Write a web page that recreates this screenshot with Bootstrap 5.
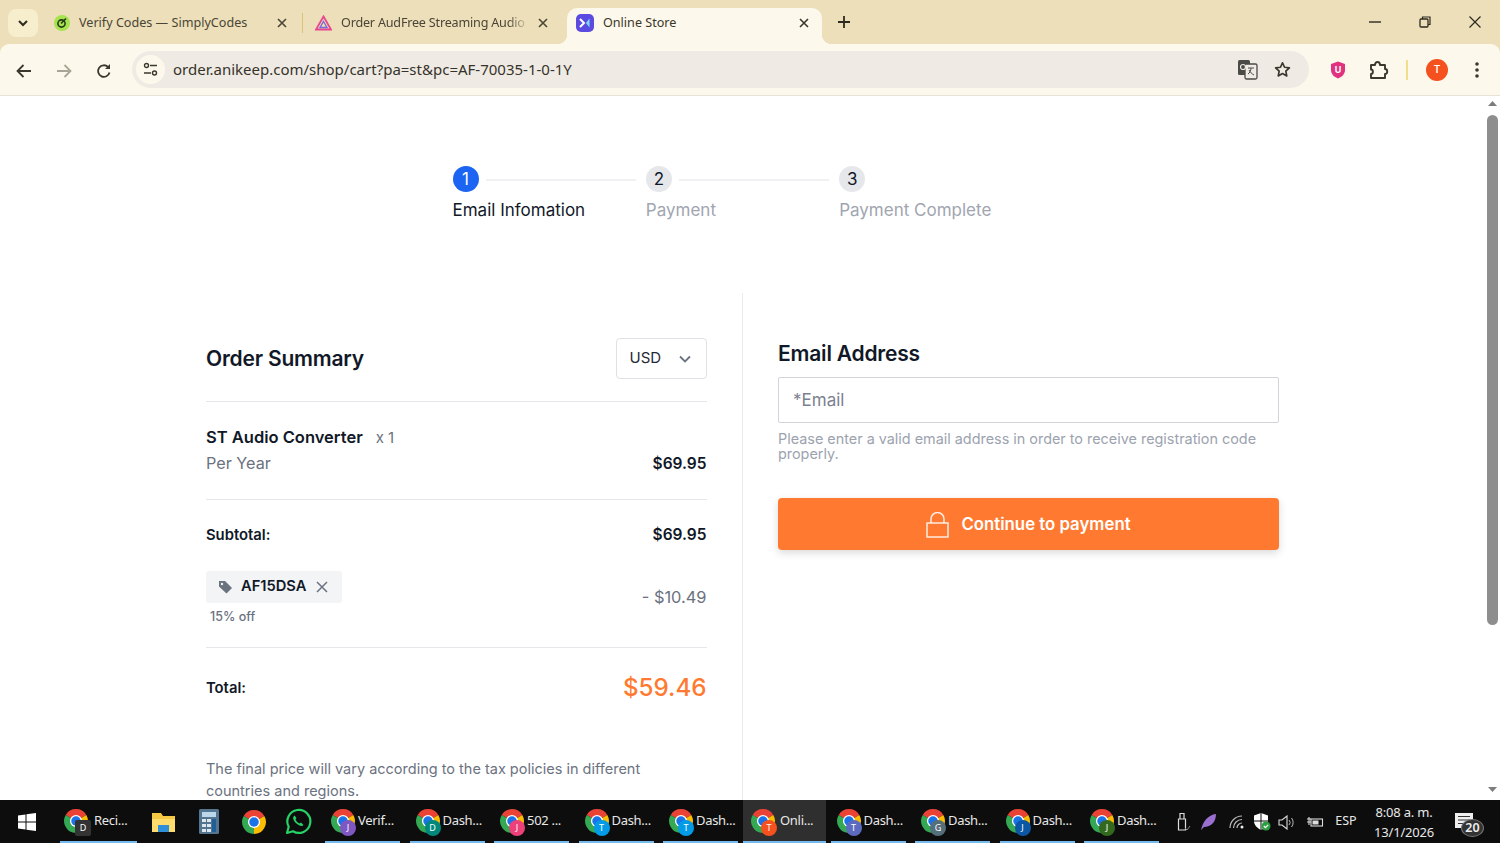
<!DOCTYPE html>
<html lang="en">
  <head>
    <meta charset="UTF-8" />
    <meta name="viewport" content="width=device-width, initial-scale=1.0" />
    <title>Online Store</title>
    <link href="https://cdn.jsdelivr.net/npm/bootstrap@5.3.3/dist/css/bootstrap.min.css" rel="stylesheet" />
    <style>
      html, body { height: 100%; overflow: hidden; }
      body { font-family: "Inter", "Liberation Sans", sans-serif; color: #111827; background: #fff; }
      .app-shell { height: 843px; width: 1500px; background: #ecdfb9; }

      /* browser tabs */
      .tab-strip { height: 44px; font-family: "Noto Sans", sans-serif; font-size: 12.6px; color: #4a4536; }
      .tab-menu { width: 30px; height: 28px; margin: 9px 0 0 8px; background: #f6eecd; border-radius: 8px; }
      .tab-item { height: 36px; margin-top: 8px; padding-bottom: 7px; white-space: nowrap; }
      .tab-one { width: 260px; margin-left: 5px; padding-left: 11px; }
      .tab-two { width: 264px; padding-left: 12px; }
      .tab-live { width: 255px; background: #fdf8ec; border-radius: 10px 10px 0 0; padding-left: 9px; color: #3a3629; position: relative; }
      .tab-live::before, .tab-live::after { content: ""; position: absolute; bottom: 0; width: 10px; height: 10px; }
      .tab-live::before { left: -10px; background: radial-gradient(circle at 0 0, transparent 10px, #fdf8ec 10.5px); }
      .tab-live::after { right: -10px; background: radial-gradient(circle at 100% 0, transparent 10px, #fdf8ec 10.5px); }
      .tab-title { flex: 1 1 auto; overflow: hidden; margin: 2px 0 0 9px; min-width: 0; }
      .tab-fade { letter-spacing: -.2px; -webkit-mask-image: linear-gradient(90deg, #000 88%, transparent); mask-image: linear-gradient(90deg, #000 88%, transparent); }
      .tab-sep { width: 1px; height: 20px; background: #d9c27a; flex: none; margin-left: 15px; }
      .tab-x { width: 10px; height: 10px; flex: none; }
      .tab-x-two { margin: 0 19px 0 8px; }
      .tab-x-live { margin: 0 13px 0 auto; }
      .tab-plus { margin-left: 16px; }
      .win-btns { margin-left: auto; }
      .win-btn { width: 50px; height: 44px; }

      /* toolbar */
      .tool-bar { height: 52px; background: #fdf8ec; border-bottom: 1px solid #e8e2d4; border-radius: 9px 9px 0 0; }
      .tool-btn { width: 40px; }
      .omni-box { width: 1177px; height: 37px; background: #efebe4; border-radius: 19px; font-family: "Noto Sans", sans-serif; font-size: 15px; color: #36332b; }
      .omni-tune { width: 29px; height: 29px; border-radius: 50%; background: #fdf8ec; margin: 0 8px 0 4px; }
      .omni-star { margin: 0 18px 0 16px; }
      .shield-ext { margin-left: 21px; }
      .puzzle-ext { margin-left: 23px; }
      .tool-line { width: 2px; height: 20px; background: #f3dc8a; margin-left: 17px; }
      .avatar-dot { width: 22px; height: 22px; background: #f4511e; color: #fff; font-size: 10px; font-weight: 600; margin-left: 18px; }
      .tool-dots { margin-left: 27px; }

      /* page */
      .page-view { height: 704px; overflow: hidden; background: #fff; }
      .page-scroll { flex: 1 1 auto; overflow: hidden; min-width: 0; }
      .scroll-rail { width: 15px; flex: none; background: #fff; }
      .scroll-thumb { width: 11px; height: 510px; background: #8e8e8e; border-radius: 5.5px; margin: 5px auto 0; }
      .scroll-end { margin-bottom: 6px; }
      .step-row { width: 580px; margin: 70px auto 0; }
      .step-cell { width: 193.33px; flex: none; }
      .step-num { width: 26px; height: 26px; flex: none; padding-top: 2px; background: #e5e7eb; color: #111827; font-size: 17px; }
      .step-on { background: #1c64f2; color: #fff; }
      .step-bar { flex: 1 1 auto; height: 2px; background: #f0f1f3; margin: 2px 10px 0 7px; }
      .step-label { font-size: 17px; line-height: 24px; color: #a1a5b0; margin-top: 6px; white-space: nowrap; }
      .step-label-on { color: #111827; }
      .cart-wrap { width: 1073px; margin: 71px auto 0; }
      .cart-left { border-right: 1px solid #e9eaec; padding: 45px 35px 0 0; height: 560px; }
      .cart-right { padding: 46px 0 0 35.5px; }
      .cart-head { font-size: 21px; font-weight: 600; line-height: 30px; letter-spacing: -.2px; }
      .head-row { margin-bottom: 22px; }
      .cur-pick { width: 91px; height: 41px; border: 1px solid #dfe1e5; border-radius: 4px; padding: 0 15px 0 13px; font-size: 15px; color: #1f2937; }
      .cart-rule { height: 1px; background: #e5e7eb; }
      .item-block { padding: 23px 0 24px; }
      .item-name { font-size: 16.5px; font-weight: 600; line-height: 24px; }
      .item-qty { font-size: 15px; color: #6b7280; margin-left: 13px; }
      .item-term { font-size: 16.2px; color: #6b7280; line-height: 24px; margin-top: 1px; }
      .price-bold { font-size: 15.5px; font-weight: 600; line-height: 24px; margin: 1px 0 -1px; }
      .sub-label { font-size: 14.8px; font-weight: 600; padding-top: 3px; }
      .sub-block { height: 68px; }
      .promo-block { padding: 3px 0 22px; }
      .promo-chip { width: 136px; height: 32px; background: #f3f4f6; border-radius: 3px; padding-left: 12px; font-size: 14.7px; font-weight: 600; }
      .promo-drop { margin-left: 10px; }
      .promo-off { font-size: 12.5px; font-weight: 500; color: #6b7280; margin: 6px 0 0 4px; line-height: 16px; }
      .promo-cut { font-size: 16.4px; color: #6b7280; }
      .total-block { height: 79px; margin-bottom: 31px; }
      .grand-price { font-size: 24.2px; font-weight: 500; color: #ff7a30; line-height: 34px; margin: 1px 0 -1px; }
      .cart-note { font-size: 14.5px; line-height: 22px; color: #6b7280; }
      .mail-input.form-control { height: 46px; border-radius: 2px; border-color: #d1d5db; font-size: 17px; padding: 0 14px; margin-top: 8px; }
      .mail-input.form-control::placeholder { color: #7b8190; }
      .mail-help { font-size: 14.4px; line-height: 15px; color: #9ca3af; margin-top: 8px; }
      .pay-btn.btn { height: 52px; width: 100%; gap: 12px; margin-top: 37px; padding-top: 8px; background: #ff7a30; border: 0; border-radius: 4px; color: #fff; font-size: 16.8px; font-weight: 600; box-shadow: 0 3px 8px rgba(0,0,0,.15); }

      /* taskbar */
      .task-bar { height: 43px; background: #0d0d0d; color: #e8e8e8; font-family: "Noto Sans", sans-serif; font-size: 13px; letter-spacing: -.3px; }
      .start-cell { width: 54px; }
      .app-run { width: 75px; height: 43px; margin-left: 9.5px; position: relative; border-bottom: 2px solid #76b9ed; padding: 0 0 0 5px; white-space: nowrap; }
      .app-run-wide { width: 77px; margin-left: 6px; padding-left: 3px; }
      .app-run-wide .app-text { margin-left: 5px; }
      .app-run-first { margin-left: 4px; }
      .app-live { width: 83px; margin: 0 -5px 0 5px; background: #2f2f2f; padding-left: 7px; }
      .app-live .app-text { margin-left: 4px; }
      .app-pin { width: 45px; height: 43px; }
      .app-chrome { width: 26px; height: 26px; flex: none; }
      .app-text { margin-left: 2px; }
      .app-dot { position: absolute; top: 20px; left: 15px; width: 16px; height: 16px; border-radius: 50%; font-size: 9px; line-height: 16px; text-align: center; color: #fff; letter-spacing: 0; }
      .app-live .app-dot { left: 18px; }
      .dot-square { background: #333; border-radius: 2px; }
      .dot-violet { background: #7e57c2; }
      .dot-teal { background: #00897b; }
      .dot-pink { background: #ec407a; }
      .dot-sky { background: #039be5; }
      .dot-red { background: #f4511e; }
      .dot-indigo { background: #5c6bc0; }
      .dot-slate { background: #546e7a; }
      .dot-navy { background: #0b57a4; }
      .dot-moss { background: #33691e; }
      .tray-zone { margin-left: auto; align-self: stretch; }
      .tray-cell { width: 25px; }
      .tray-wifi { margin-left: 3px; }
      .tray-batt { margin-left: 3px; }
      .tray-lang { font-size: 12.5px; width: 38px; letter-spacing: 0; }
      .tray-clock { width: 72px; font-size: 13px; line-height: 20px; margin-left: 3px; text-align: center; letter-spacing: -.2px; }
      .note-cell { width: 60px; position: relative; }
      .note-glyph { position: absolute; left: 15px; top: 13px; }
      .note-count { position: absolute; left: 21px; top: 19px; width: 23px; height: 18px; border-radius: 50%; background: #333; border: 1px solid #777; font-size: 12.5px; font-weight: 600; line-height: 16px; text-align: center; color: #eee; letter-spacing: 0; }
    </style>
  </head>

  <body>
    <svg width="0" height="0" class="position-absolute">
      <symbol id="chrome-mark" viewBox="0 0 24 24">
        <path fill="#ea4335" d="M12 12 2.47 6.5A11 11 0 0 1 21.53 6.5Z" />
        <path fill="#fbbc04" d="M12 12 21.53 6.5A11 11 0 0 1 12 23Z" />
        <path fill="#34a853" d="M12 12V23A11 11 0 0 1 2.47 6.5Z" />
        <circle cx="12" cy="12" r="5.6" fill="#fff" />
        <circle cx="12" cy="12" r="4.4" fill="#1a73e8" />
      </symbol>
      <symbol id="close-mark" viewBox="0 0 10 10">
        <path d="M1 1 9 9M9 1 1 9" fill="none" stroke="currentColor" stroke-width="1.6" />
      </symbol>
    </svg>

    <div class="app-shell d-flex flex-column">
      <!-- tabs -->
      <div class="tab-strip d-flex flex-shrink-0">
        <div class="tab-menu d-flex align-items-center justify-content-center">
          <svg width="10" height="7" viewBox="0 0 10 7"><path d="M1 1l4 4 4-4" fill="none" stroke="#2d2a20" stroke-width="2" /></svg>
        </div>
        <div class="tab-item tab-one d-flex align-items-center">
          <svg width="16" height="16" viewBox="0 0 16 16" class="flex-shrink-0"><circle cx="8" cy="8" r="8" fill="#a6e34f" /><circle cx="7.5" cy="8.5" r="3.6" fill="none" stroke="#26391a" stroke-width="1.6" /><path d="M7 8.5l5-5" stroke="#26391a" stroke-width="1.6" /></svg>
          <span class="tab-title">Verify Codes — SimplyCodes</span>
          <svg class="tab-x"><use href="#close-mark" /></svg>
          <span class="tab-sep"></span>
        </div>
        <div class="tab-item tab-two d-flex align-items-center">
          <svg width="17" height="16" viewBox="0 0 17 16" class="flex-shrink-0"><path d="M8.5 1.5 16 14.5H1Z" fill="none" stroke="#e8478f" stroke-width="1.8" /><path d="M8.5 6.5 12 12.5H5Z" fill="none" stroke="#7c6ad6" stroke-width="1.4" /></svg>
          <span class="tab-title tab-fade">Order AudFree Streaming Audio</span>
          <svg class="tab-x tab-x-two"><use href="#close-mark" /></svg>
        </div>
        <div class="tab-item tab-live d-flex align-items-center">
          <svg width="18" height="18" viewBox="0 0 18 18" class="flex-shrink-0"><rect width="18" height="18" rx="5" fill="#5b4be0" /><path d="M4 5l4 4-4 4" fill="none" stroke="#fff" stroke-width="2" /><path d="M13.5 4.5v9L10 9Z" fill="#7fdcff" /></svg>
          <span class="tab-title">Online Store</span>
          <svg class="tab-x tab-x-live"><use href="#close-mark" /></svg>
        </div>
        <div class="tab-plus d-flex align-items-center">
          <svg width="12" height="12" viewBox="0 0 12 12"><path d="M6 0v12M0 6h12" stroke="#2d2a20" stroke-width="1.8" /></svg>
        </div>
        <div class="win-btns d-flex">
          <div class="win-btn d-flex align-items-center justify-content-center">
            <svg width="12" height="2"><path d="M0 1h12" stroke="#2d2a20" stroke-width="1.4" /></svg>
          </div>
          <div class="win-btn d-flex align-items-center justify-content-center">
            <svg width="12" height="12" viewBox="0 0 12 12"><rect x="1" y="3" width="8" height="8" rx="1" fill="none" stroke="#2d2a20" stroke-width="1.3" /><path d="M3.5 3V1H11v7.5H9" fill="none" stroke="#2d2a20" stroke-width="1.2" /></svg>
          </div>
          <div class="win-btn d-flex align-items-center justify-content-center">
            <svg width="12" height="12" viewBox="0 0 12 12"><path d="M.5.5l11 11M11.5.5l-11 11" stroke="#2d2a20" stroke-width="1.2" /></svg>
          </div>
        </div>
      </div>

      <!-- toolbar -->
      <div class="tool-bar d-flex align-items-center flex-shrink-0">
        <div class="tool-btn text-center ms-1">
          <svg width="16" height="14" viewBox="0 0 16 14"><path d="M15 7H2M7.5 1 1.5 7l6 6" fill="none" stroke="#3b382e" stroke-width="1.8" /></svg>
        </div>
        <div class="tool-btn text-center">
          <svg width="16" height="14" viewBox="0 0 16 14"><path d="M1 7h13M8.5 1l6 6-6 6" fill="none" stroke="#a9a594" stroke-width="1.8" /></svg>
        </div>
        <div class="tool-btn text-center">
          <svg width="16" height="16" viewBox="0 0 16 16"><path d="M13.5 9.5A5.8 5.8 0 1 1 12 4" fill="none" stroke="#3b382e" stroke-width="1.8" /><path d="M14 1v5H9Z" fill="#3b382e" /></svg>
        </div>
        <div class="omni-box d-flex align-items-center flex-shrink-0 ms-2">
          <span class="omni-tune d-flex align-items-center justify-content-center">
            <svg width="15" height="15" viewBox="0 0 15 15"><circle cx="3.5" cy="3.5" r="2" fill="none" stroke="#3b382e" stroke-width="1.4" /><path d="M7 3.5h7M1 11h7" stroke="#3b382e" stroke-width="1.4" /><circle cx="11.5" cy="11" r="2" fill="none" stroke="#3b382e" stroke-width="1.4" /></svg>
          </span>
          <span>order.anikeep.com/shop/cart?pa=st&amp;pc=AF-70035-1-0-1Y</span>
          <svg width="21" height="21" viewBox="0 0 21 21" class="ms-auto"><rect x="1" y="1" width="12" height="15" rx="1.5" fill="#4a4a46" /><rect x="8" y="5" width="12" height="15" rx="1.5" fill="#efebe4" stroke="#4a4a46" stroke-width="1.3" /><circle cx="6" cy="8" r="2.5" fill="none" stroke="#efebe4" stroke-width="1.2" /><path d="M11 9h6M14 9c0 3-1.5 5-3 6M12 11c1 2 3 4 5 5" fill="none" stroke="#4a4a46" stroke-width="1" /></svg>
          <svg width="17" height="17" viewBox="0 0 24 24" class="omni-star"><path d="M12 2.5l2.9 6.300 6.800.8-5 4.700 1.300 6.800-6-3.400-6 3.400 1.300-6.800-5-4.700 6.800-.8Z" fill="none" stroke="#3b382e" stroke-width="2.4" stroke-linejoin="round" /></svg>
        </div>
        <svg width="16" height="18" viewBox="0 0 16 18" class="shield-ext flex-shrink-0"><path d="M8 .5l7 2.500v6c0 4-3 7-7 8.500-4-1.500-7-4.500-7-8.500V3Z" fill="#e0327f" /><text x="8" y="12" text-anchor="middle" font-size="9" font-weight="700" fill="#fff" font-family="Inter, sans-serif">U</text></svg>
        <svg width="20" height="20" viewBox="0 0 20 20" class="puzzle-ext flex-shrink-0"><path d="M2 5h4c0-4 5-4 5 0h5v4c3 0 3 5 0 5v4H2v-4c2.5 0 2.5-4.500 0-4.500Z" fill="none" stroke="#3b382e" stroke-width="1.9" stroke-linejoin="round" /></svg>
        <span class="tool-line flex-shrink-0"></span>
        <span class="avatar-dot rounded-circle d-flex align-items-center justify-content-center flex-shrink-0">T</span>
        <svg width="4" height="16" viewBox="0 0 4 16" class="flex-shrink-0 tool-dots"><circle cx="2" cy="2" r="1.8" fill="#3b382e" /><circle cx="2" cy="8" r="1.8" fill="#3b382e" /><circle cx="2" cy="14" r="1.8" fill="#3b382e" /></svg>
      </div>

      <!-- page -->
      <div class="page-view d-flex flex-shrink-0">
        <div class="page-scroll">
          <div class="step-row d-flex">
            <div class="step-cell">
              <div class="d-flex align-items-center">
                <span class="step-num step-on rounded-circle d-flex align-items-center justify-content-center">1</span>
                <span class="step-bar"></span>
              </div>
              <div class="step-label step-label-on">Email Infomation</div>
            </div>
            <div class="step-cell">
              <div class="d-flex align-items-center">
                <span class="step-num rounded-circle d-flex align-items-center justify-content-center">2</span>
                <span class="step-bar"></span>
              </div>
              <div class="step-label">Payment</div>
            </div>
            <div class="step-cell">
              <div class="d-flex align-items-center">
                <span class="step-num rounded-circle d-flex align-items-center justify-content-center">3</span>
              </div>
              <div class="step-label">Payment Complete</div>
            </div>
          </div>

          <div class="cart-wrap row g-0">
            <div class="col-6 cart-left">
              <div class="head-row d-flex align-items-center justify-content-between">
                <div class="cart-head">Order Summary</div>
                <div class="cur-pick d-flex align-items-center justify-content-between">
                  <span>USD</span>
                  <svg width="12" height="8" viewBox="0 0 12 8"><path d="M1 1.5l5 5 5-5" fill="none" stroke="#6b7280" stroke-width="1.8" /></svg>
                </div>
              </div>
              <div class="cart-rule"></div>
              <div class="d-flex justify-content-between align-items-end item-block">
                <div>
                  <div><span class="item-name">ST Audio Converter</span><span class="item-qty">x 1</span></div>
                  <div class="item-term">Per Year</div>
                </div>
                <div class="price-bold">$69.95</div>
              </div>
              <div class="cart-rule"></div>
              <div class="d-flex justify-content-between align-items-center sub-block">
                <span class="sub-label">Subtotal:</span>
                <span class="price-bold">$69.95</span>
              </div>
              <div class="d-flex justify-content-between align-items-center promo-block">
                <div>
                  <div class="promo-chip d-flex align-items-center">
                    <svg width="15" height="14" viewBox="0 0 15 14" class="flex-shrink-0"><path d="M1 1h6l7 7-5.500 5.500-7.500-7Z" fill="#6b7280" /><circle cx="4" cy="4" r="1.2" fill="#f3f4f6" /></svg>
                    <span class="ms-2">AF15DSA</span>
                    <svg width="12" height="12" viewBox="0 0 12 12" class="promo-drop"><path d="M1 1l10 10M11 1 1 11" stroke="#6b7280" stroke-width="1.5" /></svg>
                  </div>
                  <div class="promo-off">15% off</div>
                </div>
                <span class="promo-cut">- $10.49</span>
              </div>
              <div class="cart-rule"></div>
              <div class="d-flex justify-content-between align-items-center total-block">
                <span class="sub-label">Total:</span>
                <span class="grand-price">$59.46</span>
              </div>
              <div class="cart-note">The final price will vary according to the tax policies in different countries and regions.</div>
            </div>
            <div class="col-6 cart-right">
              <div class="cart-head">Email Address</div>
              <input type="text" class="form-control mail-input" placeholder="*Email" />
              <div class="mail-help">Please enter a valid email address in order to receive registration code properly.</div>
              <button type="button" class="btn pay-btn d-flex align-items-center justify-content-center">
                <svg width="23" height="26" viewBox="0 0 23 26"><rect x="1" y="11" width="21" height="14" fill="none" stroke="#fff" stroke-width="1.5" opacity=".85" /><path d="M5 11V7a6.5 6.5 0 0 1 13 0v4" fill="none" stroke="#fff" stroke-width="1.5" opacity=".85" /></svg>
                Continue to payment
              </button>
            </div>
          </div>
        </div>
        <div class="scroll-rail d-flex flex-column">
          <svg width="15" height="10" viewBox="0 0 15 10" class="d-block mt-1 flex-shrink-0"><path d="M7.5 1 12 6H3Z" fill="#7d7d7d" /></svg>
          <div class="scroll-thumb"></div>
          <svg width="15" height="10" viewBox="0 0 15 10" class="d-block mt-auto scroll-end flex-shrink-0"><path d="M7.5 8 12 3H3Z" fill="#7d7d7d" /></svg>
        </div>
      </div>

      <!-- taskbar -->
      <div class="task-bar d-flex align-items-center flex-shrink-0">
        <div class="start-cell d-flex justify-content-center">
          <svg width="18" height="18" viewBox="0 0 18 18"><path fill="#fff" d="M0 2.5 7.500 1.500v7H0ZM8.500 1.300 18 0v8.500H8.500ZM0 9.500h7.500v7L0 15.500ZM8.500 9.500H18V18l-9.500-1.300Z" /></svg>
        </div>
        <div class="app-run app-run-wide d-flex align-items-center">
          <svg class="app-chrome"><use href="#chrome-mark" /></svg><span class="app-text">Reci...</span>
          <span class="app-dot dot-square">D</span>
        </div>
        <div class="app-pin d-flex align-items-center justify-content-center ms-1">
          <svg width="25" height="23" viewBox="0 0 25 23"><path d="M1 3h9l2 3h12v16H1Z" fill="#f6c945" /><path d="M1 9h23v13H1Z" fill="#ffdc6b" /><rect x="7" y="15" width="11" height="7" fill="#2f8fd8" /></svg>
        </div>
        <div class="app-pin d-flex align-items-center justify-content-center">
          <svg width="20" height="25" viewBox="0 0 20 25"><rect width="20" height="25" rx="1.5" fill="#54758f" /><rect x="3" y="3" width="14" height="5" fill="#bcd6ea" /><path fill="#dfe7ee" d="M3 10h4v3H3ZM8 10h4v3H8ZM3 15h4v3H3ZM8 15h4v3H8ZM3 20h4v3H3ZM8 20h4v3H8Z" /><rect x="13" y="10" width="4" height="13" fill="#1f5f96" /></svg>
        </div>
        <div class="app-pin d-flex align-items-center justify-content-center">
          <svg class="app-chrome"><use href="#chrome-mark" /></svg>
        </div>
        <div class="app-pin d-flex align-items-center justify-content-center">
          <svg width="27" height="27" viewBox="0 0 27 27"><path d="M2 25l1.700-6.200A11.500 11.500 0 1 1 8 23.300Z" fill="none" stroke="#25d366" stroke-width="2.2" stroke-linejoin="round" /><path d="M9 8c-2 2 0 5.500 2.500 7.500s5.500 3.500 7 1.500l-2.500-2.500-1.500 1c-2-1-3-2-4-4l1-1.500L9.500 7.500Z" fill="#25d366" /></svg>
        </div>
        <div class="app-run app-run-first d-flex align-items-center">
          <svg class="app-chrome"><use href="#chrome-mark" /></svg><span class="app-text">Verif...</span>
          <span class="app-dot dot-violet">J</span>
        </div>
        <div class="app-run d-flex align-items-center">
          <svg class="app-chrome"><use href="#chrome-mark" /></svg><span class="app-text">Dash...</span>
          <span class="app-dot dot-teal">D</span>
        </div>
        <div class="app-run d-flex align-items-center">
          <svg class="app-chrome"><use href="#chrome-mark" /></svg><span class="app-text">502 ...</span>
          <span class="app-dot dot-pink">J</span>
        </div>
        <div class="app-run d-flex align-items-center">
          <svg class="app-chrome"><use href="#chrome-mark" /></svg><span class="app-text">Dash...</span>
          <span class="app-dot dot-sky">T</span>
        </div>
        <div class="app-run d-flex align-items-center">
          <svg class="app-chrome"><use href="#chrome-mark" /></svg><span class="app-text">Dash...</span>
          <span class="app-dot dot-sky">T</span>
        </div>
        <div class="app-run app-live d-flex align-items-center">
          <svg class="app-chrome"><use href="#chrome-mark" /></svg><span class="app-text">Onli...</span>
          <span class="app-dot dot-red">T</span>
        </div>
        <div class="app-run d-flex align-items-center">
          <svg class="app-chrome"><use href="#chrome-mark" /></svg><span class="app-text">Dash...</span>
          <span class="app-dot dot-indigo">T</span>
        </div>
        <div class="app-run d-flex align-items-center">
          <svg class="app-chrome"><use href="#chrome-mark" /></svg><span class="app-text">Dash...</span>
          <span class="app-dot dot-slate">G</span>
        </div>
        <div class="app-run d-flex align-items-center">
          <svg class="app-chrome"><use href="#chrome-mark" /></svg><span class="app-text">Dash...</span>
          <span class="app-dot dot-navy">J</span>
        </div>
        <div class="app-run d-flex align-items-center">
          <svg class="app-chrome"><use href="#chrome-mark" /></svg><span class="app-text">Dash...</span>
          <span class="app-dot dot-moss">J</span>
        </div>

        <div class="tray-zone d-flex align-items-center">
          <div class="tray-cell text-center">
            <svg width="15" height="20" viewBox="0 0 15 20"><path d="M2.5 7h7v11h-7ZM4 1.5h4V7H4Z" fill="none" stroke="#ddd" stroke-width="1.2" /><path d="M9 16l2 2 3-4" fill="none" stroke="#888" stroke-width="1" /></svg>
          </div>
          <div class="tray-cell text-center">
            <svg width="17" height="18" viewBox="0 0 17 18"><path d="M1 17C3 8 8 2 16 1c0 8-5 13-12 13Z" fill="#9b6fd0" /></svg>
          </div>
          <div class="tray-cell tray-wifi text-center">
            <svg width="16" height="14" viewBox="0 0 16 14"><path d="M1 13A12 12 0 0 1 13 1M4.5 13A8.5 8.5 0 0 1 13 4.5M8 13A5 5 0 0 1 13 8" fill="none" stroke="#bbb" stroke-width="1.2" /><circle cx="13" cy="12" r="1.5" fill="#eee" /></svg>
          </div>
          <div class="tray-cell text-center">
            <svg width="18" height="18" viewBox="0 0 18 18"><path d="M8 0 15 2.5V8c0 4-3 7-7 9-4-2-7-5-7-9V2.5Z" fill="#fff" /><path d="M8 0v17M1 8h14" stroke="#0d0d0d" stroke-width="1" /><circle cx="13" cy="13" r="4.5" fill="#2ea043" /><path d="M10.8 13l1.6 1.6 2.8-2.800" fill="none" stroke="#fff" stroke-width="1.2" /></svg>
          </div>
          <div class="tray-cell text-center">
            <svg width="18" height="15" viewBox="0 0 18 15"><path d="M1 5h3l5-4v13l-5-4H1Z" fill="none" stroke="#ddd" stroke-width="1.1" /><path d="M11 5a3.5 3.5 0 0 1 0 5M13.5 3a7 7 0 0 1 0 9" fill="none" stroke="#bbb" stroke-width="1" /></svg>
          </div>
          <div class="tray-cell tray-batt text-center">
            <svg width="18" height="12" viewBox="0 0 18 12"><rect x="5" y="3" width="11.5" height="7" fill="none" stroke="#ddd" stroke-width="1.1" /><rect x="6.5" y="4.5" width="6" height="4" fill="#ddd" /><path d="M1 3h4M1 6h4M3 1v8" stroke="#ddd" stroke-width="1.1" /></svg>
          </div>
          <div class="tray-lang text-center">ESP</div>
          <div class="tray-clock">8:08 a. m.<br />13/1/2026</div>
          <div class="note-cell align-self-stretch">
            <svg width="18" height="15" viewBox="0 0 18 15" class="note-glyph"><path d="M0 0h18v15H0Z" fill="#eee" /><path d="M3 3.5h12M3 7h12M3 10.5h8" stroke="#333" stroke-width="1.1" /></svg>
            <span class="note-count">20</span>
          </div>
        </div>
      </div>
    </div>
  </body>
</html>
